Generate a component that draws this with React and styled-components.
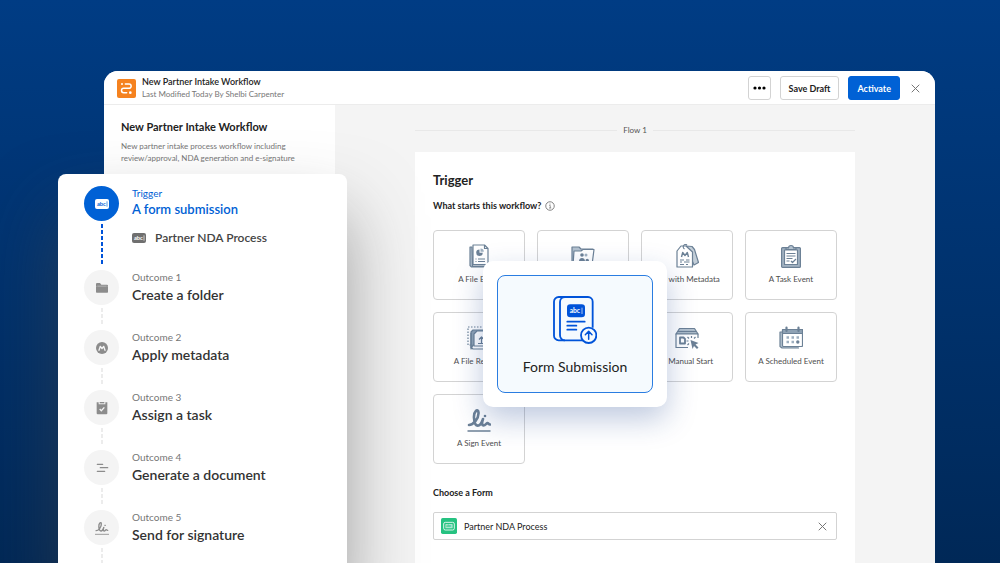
import React, { useState } from 'react'
import styled, { createGlobalStyle } from 'styled-components'

const outcomes = [
  { id: 1, title: 'Create a folder', icon: 'folder' },
  { id: 2, title: 'Apply metadata', icon: 'metadata' },
  { id: 3, title: 'Assign a task', icon: 'task' },
  { id: 4, title: 'Generate a document', icon: 'document' },
  { id: 5, title: 'Send for signature', icon: 'sign' },
]

const triggers = [
  { id: 'file', label: 'A File Event' },
  { id: 'folder', label: 'A Folder Event' },
  { id: 'metadata', label: 'File with Metadata' },
  { id: 'task', label: 'A Task Event' },
  { id: 'request', label: 'A File Request' },
  { id: 'form', label: 'Form Submission' },
  { id: 'manual', label: 'A Manual Start' },
  { id: 'scheduled', label: 'A Scheduled Event' },
  { id: 'sign', label: 'A Sign Event' },
]

const Logo = () => (
  <svg width="19" height="19" viewBox="0 0 57 57" aria-hidden="true">
    <rect width="57" height="57" rx="6" fill="#f5821f" />
    <g fill="none" stroke="#fff" strokeWidth="4.5" strokeLinecap="round">
      <path d="M25 15h11a6.500 6.500 0 0 1 0 13H20a6.500 6.500 0 0 0 0 13h9" />
    </g>
    <circle cx="15" cy="15" r="3" fill="#fff" />
    <circle cx="40" cy="41" r="4" fill="#fff" />
  </svg>
)

const CloseIcon = () => (
  <svg width="9" height="9" viewBox="0 0 9 9" aria-hidden="true">
    <path d="M1 1l7 7M8 1L1 8" stroke="#767676" strokeLinecap="round" />
  </svg>
)

const InfoIcon = () => (
  <svg width="10" height="10" viewBox="0 0 20 20" aria-hidden="true">
    <circle cx="10" cy="10" r="8.500" fill="none" stroke="#767676" strokeWidth="1.800" />
    <path d="M8.500 9h2v5M8 14h4.500" fill="none" stroke="#767676" strokeWidth="1.500" />
    <circle cx="10" cy="6" r="1.200" fill="#767676" />
  </svg>
)

const AbcIcon = ({ fill, color }) => (
  <svg width="14" height="10" viewBox="0 0 42 30" aria-hidden="true">
    <rect width="42" height="30" rx="6" fill={fill} />
    <text x="6" y="20" fontSize="17" fontWeight="700" fontFamily="Lato, sans-serif" fill={color}>
      abc
    </text>
    <path d="M36 7v16" stroke={color} strokeWidth="2" />
  </svg>
)

const GreenFormIcon = () => (
  <svg width="16" height="16" viewBox="0 0 48 48" aria-hidden="true">
    <rect width="48" height="48" rx="5" fill="#26c281" />
    <rect x="8" y="13" width="32" height="23" rx="5" fill="none" stroke="#fff" strokeWidth="2.500" />
    <rect x="13" y="18" width="22" height="13" rx="2" fill="#a8e7cd" />
    <text x="15" y="28" fontSize="10" fontWeight="700" fontFamily="Lato, sans-serif" fill="#26c281">
      abc
    </text>
  </svg>
)

const signPath = 'M2 17c4 0 10-6 9.500-12.500C11 0 6.500 3 7 10c.300 6 2 8 4.500 7.500 2.500-.500 3.500-4 4.500-6.500-1 3-1.500 6 .500 6.500 2 0 2.500-2 4-2.500 1 0 1 1.500 2.500 1.500'

const StepIcon = ({ name }) => (
  <svg width="14" height="16" viewBox="0 0 42 48" aria-hidden="true">
    {name === 'folder' && (
      <g>
        <path d="M3 12a3 3 0 0 1 3-3h9l4 5h17a3 3 0 0 1 3 3v1H3z" fill="#8c8c8c" />
        <rect x="3" y="18" width="36" height="20" rx="2" fill="#8c8c8c" />
        <path d="M7 18.500h28" stroke="#ddd" strokeWidth="1.500" />
      </g>
    )}
    {name === 'metadata' && (
      <g>
        <circle cx="21" cy="24" r="18" fill="#8c8c8c" />
        <path
          d="M12 31l4-12 5 7 5-7 4 12"
          fill="none"
          stroke="#f4f4f4"
          strokeWidth="4"
          strokeLinecap="round"
          strokeLinejoin="round"
        />
      </g>
    )}
    {name === 'task' && (
      <g>
        <path d="M5 7h6v6h20V7h6v33a3 3 0 0 1-3 3H8a3 3 0 0 1-3-3z" fill="#8c8c8c" />
        <path d="M14 6h14v4H14z" fill="#8c8c8c" />
        <path d="M14 27l5 5 9-10" fill="none" stroke="#f4f4f4" strokeWidth="4" />
      </g>
    )}
    {name === 'document' && (
      <path d="M7 13h16M16 23h22M7 34h22" stroke="#8c8c8c" strokeWidth="4" strokeLinecap="round" />
    )}
    {name === 'sign' && (
      <g fill="none" stroke="#8c8c8c" strokeLinecap="round" strokeLinejoin="round">
        <path d={signPath} transform="translate(0 4) scale(1.650)" strokeWidth="2.500" />
        <circle cx="30" cy="16" r="1.500" fill="#8c8c8c" />
        <path d="M1 43h40" strokeWidth="2.500" />
      </g>
    )}
  </svg>
)

const TriggerIcon = ({ name }) => (
  <svg
    width="24"
    height="24"
    viewBox="0 0 24 24"
    fill="none"
    stroke="#6c8196"
    strokeWidth="1.200"
    strokeLinejoin="round"
    aria-hidden="true"
  >
    {name === 'file' && (
      <>
        <path d="M3 3v18.500l1.500 1.500H17l1-1H5.500L5 3z" fill="#b4c2cf" />
        <path d="M6 1h11.500L21 4.500V20.500H6z" fill="#fff" />
        <path d="M17.500 1v3.500H21" />
        <path d="M12.500 5.500a3.300 3.300 0 1 0 3.300 3.300h-3.300z" fill="#6c8196" stroke="none" />
        <path d="M13.500 4.500a3.300 3.300 0 0 1 3.300 3.300h-3.300z" fill="#9fb0c0" stroke="none" />
        <path d="M8.500 15h1M11 15h7M8.500 17.500h1M11 17.500h7" />
      </>
    )}
    {name === 'folder' && (
      <>
        <path d="M1 21V3h7l2 2h12l-1.500 3" fill="#b4c2cf" />
        <path d="M3 7h7l2-1.500h11L21 21H2z" fill="#fff" />
        <circle cx="11" cy="11" r="1.800" fill="#6c8196" stroke="none" />
        <circle cx="15" cy="11" r="1.500" fill="#9fb0c0" stroke="none" />
        <path d="M8 17c0-4 6-4 6 0zM14.500 17c0-3 3.500-3 3.500 0z" fill="#6c8196" stroke="none" />
      </>
    )}
    {name === 'metadata' && (
      <>
        <path d="M11 2l6 .500 2.500 3 4 13-4.500 2.500z" fill="#c3ced8" />
        <path d="M2 7l4-5h5l6.500 6v15H2z" fill="#fff" />
        <path d="M9.500 5c-3-2 0-6 2.500-4" />
        <path d="M6.500 13l1.200-4.500 2.300 3 2.300-3L13.500 13" strokeWidth="1.400" />
        <path d="M5 16h4M11 16h3.500M5 18h2M9 18h5.500M5 20.500h4M11 20.500h2" />
      </>
    )}
    {name === 'task' && (
      <>
        <rect x="2.600" y="3.600" width="18.800" height="19.800" rx="1" fill="#a3b3c2" />
        <path d="M5.500 6h13v14.500h-13z" fill="#fff" />
        <path d="M7 5.500V4h2.500a2.500 2.500 0 0 1 5 0H17v1.500z" fill="#b4c2cf" />
        <path d="M7.500 9.500h9M7.500 12h9M7.500 14.500h6M7.500 17h3M12 17l1.500 1.500L17 15" />
      </>
    )}
    {name === 'request' && (
      <>
        <path d="M1 1h18v18H1z" strokeDasharray="1.500 1.500" />
        <path d="M4 6l2-2h11v15H6l-2 4z" fill="#8fa2b4" />
        <path d="M4 7v14.500L6 23h14" />
        <path d="M10 5h9l3 3v12H7V8z" fill="#fff" />
        <path d="M14.500 17v-5.500M12 13.500l2.500-2.500 2.500 2.500M11 17.500h7" />
      </>
    )}
    {name === 'manual' && (
      <>
        <path d="M1 8l3.500-5.500h15L23 8z" fill="#b4c2cf" />
        <path d="M3 5.500h18" />
        <path d="M23 12V8H1v13.500h12" fill="#fff" />
        <path d="M5 11.500h3.500l1.500 1.500v4.500H5z" strokeWidth="1.800" />
        <path d="M16.500 10v2M12.500 11l1.500 1.500M20.500 11L19 12.500M11.500 15h2M12.500 19l1.500-1.500" />
        <path d="M15.500 14l8 3-3 1.500 3 3-1.500 1.500-3-3-1.500 3z" fill="#6c8196" stroke="none" />
      </>
    )}
    {name === 'scheduled' && (
      <>
        <path d="M3 6H1v14.500L3 22h17" fill="#b4c2cf" />
        <rect x="3.500" y="3.500" width="20" height="17" rx="1" fill="#fff" />
        <path d="M3.500 3.500h20v4h-20z" fill="#8fa2b4" />
        <path d="M7.500 1.500v3.500M19.500 1.500v3.500" strokeWidth="2.200" strokeLinecap="round" />
        <path
          d="M7.500 11.500h2.500M12.500 11.500h2.500M17.500 11.500h2.500M7.500 16h2.500M12.500 16h2.500"
          stroke="#9fb0c0"
          strokeWidth="2.500"
        />
        <circle cx="18.800" cy="16" r="1.700" fill="#6c8196" stroke="none" />
      </>
    )}
    {name === 'sign' && (
      <>
        <path d={signPath} strokeWidth="2.600" strokeLinecap="round" />
        <circle cx="18" cy="8" r="1.300" fill="#6c8196" stroke="none" />
        <path d="M.500 23h23" strokeWidth="1.500" />
      </>
    )}
  </svg>
)

const FormSubmissionIcon = () => (
  <svg width="44" height="48" viewBox="0 0 132 144" fill="none" stroke="#0053d9" strokeWidth="5.500" aria-hidden="true">
    <path d="M92 133H17A14 14 0 0 1 3 119V17A14 14 0 0 1 17 3h88a14 14 0 0 1 14 14v78" />
    <path d="M36 3A15 15 0 0 0 21 18v99a15 15 0 0 0 15 16" />
    <rect x="42" y="25" width="54" height="39" rx="10" fill="#0053d9" stroke="none" />
    <text x="50" y="50" fontSize="20" fontWeight="700" fontFamily="Lato, sans-serif" fill="#fff" stroke="none">
      abc
    </text>
    <path d="M87 35v19" stroke="#fff" strokeWidth="2" />
    <path d="M43 77h52M43 89h27M43 101h27" strokeLinecap="round" />
    <circle cx="107" cy="118" r="23" fill="#f5fafe" />
    <path d="M107 130v-23M97 116l10-10 10 10" strokeWidth="4.500" strokeLinecap="round" strokeLinejoin="round" />
  </svg>
)

const App = () => {
  const [selected, setSelected] = useState('form')
  const [form, setForm] = useState('Partner NDA Process')

  return (
    <Page>
      <GlobalStyle />
      <Window>
        <Header>
          <Logo />
          <HeaderText>
            <HeaderTitle>New Partner Intake Workflow</HeaderTitle>
            <HeaderMeta>Last Modified Today By Shelbi Carpenter</HeaderMeta>
          </HeaderText>
          <Actions>
            <Button $narrow aria-label="More options">
              <svg width="13" height="4" viewBox="0 0 13 4" aria-hidden="true">
                <circle cx="2" cy="2" r="1.600" />
                <circle cx="6.500" cy="2" r="1.600" />
                <circle cx="11" cy="2" r="1.600" />
              </svg>
            </Button>
            <Button>Save Draft</Button>
            <Button $primary>Activate</Button>
            <IconButton aria-label="Close">
              <CloseIcon />
            </IconButton>
          </Actions>
        </Header>
        <Body>
          <Sidebar>
            <SidebarTitle>New Partner Intake Workflow</SidebarTitle>
            <SidebarText>
              New partner intake process workflow including
              <br />
              review/approval, NDA generation and e-signature
            </SidebarText>
          </Sidebar>
          <Content>
            <FlowDivider>Flow 1</FlowDivider>
            <Card>
              <CardTitle>Trigger</CardTitle>
              <Question>
                What starts this workflow?
                <InfoIcon />
              </Question>
              <TriggerGrid>
                {triggers.map((trigger) => (
                  <Cell key={trigger.id}>
                    {trigger.id === 'form' ? (
                      <Floating>
                        <FormTile
                          aria-pressed={selected === trigger.id}
                          onClick={() => setSelected(trigger.id)}
                        >
                          <FormSubmissionIcon />
                          {trigger.label}
                        </FormTile>
                      </Floating>
                    ) : (
                      <Tile
                        aria-pressed={selected === trigger.id}
                        onClick={() => setSelected(trigger.id)}
                      >
                        <TriggerIcon name={trigger.id} />
                        {trigger.label}
                      </Tile>
                    )}
                  </Cell>
                ))}
              </TriggerGrid>
              <FieldLabel htmlFor="form">Choose a Form</FieldLabel>
              <Field>
                <GreenFormIcon />
                <FieldInput id="form" value={form} onChange={(e) => setForm(e.target.value)} />
                <IconButton aria-label="Clear form" onClick={() => setForm('')}>
                  <CloseIcon />
                </IconButton>
              </Field>
            </Card>
          </Content>
        </Body>
      </Window>
      <Steps>
        <Step>
          <Rail>
            <Bubble $active>
              <AbcIcon fill="#fff" color="#0061d5" />
            </Bubble>
            <Connector $active />
          </Rail>
          <StepText>
            <StepLabel $active>Trigger</StepLabel>
            <StepTitle $active>A form submission</StepTitle>
            <StepDetail>
              <AbcIcon fill="#6f6f6f" color="#fff" />
              Partner NDA Process
            </StepDetail>
          </StepText>
        </Step>
        {outcomes.map((outcome) => (
          <Step key={outcome.id}>
            <Rail>
              <Bubble>
                <StepIcon name={outcome.icon} />
              </Bubble>
              <Connector />
            </Rail>
            <StepText>
              <StepLabel>Outcome {outcome.id}</StepLabel>
              <StepTitle>{outcome.title}</StepTitle>
            </StepText>
          </Step>
        ))}
      </Steps>
    </Page>
  )
}

export default App

const GlobalStyle = createGlobalStyle`
  * {
    box-sizing: border-box;
  }
  body {
    margin: 0;
    font-family: Lato, 'Liberation Sans', sans-serif;
    color: #222;
  }
  button, input {
    font-family: inherit;
    margin: 0;
    padding: 0;
  }
  svg {
    flex-shrink: 0;
  }
`

const Page = styled.div`
  position: relative;
  height: 100vh;
  overflow: hidden;
  display: flex;
  padding: 71px 65px 0 104px;
  background: linear-gradient(#003c84, #002857);
`
const Window = styled.main`
  flex: 1;
  display: flex;
  flex-direction: column;
  border-radius: 14px 14px 0 0;
  background-color: #f4f4f4;
  overflow: hidden;
`
const Header = styled.header`
  display: flex;
  align-items: center;
  padding: 4px 13px 3px;
  background-color: #fff;
  border-bottom: 1px solid #ececec;
`
const HeaderText = styled.div`
  flex: 1;
  margin-left: 6px;
  line-height: 13px;
`
const HeaderTitle = styled.div`
  font-size: 9px;
  font-weight: 600;
`
const HeaderMeta = styled.div`
  font-size: 8px;
  color: #767676;
`
const Actions = styled.div`
  display: flex;
  align-items: center;
  gap: 9px;
`
const Button = styled.button`
  height: 24px;
  padding: 0 ${(props) => (props.$narrow ? '4px' : '8px')};
  display: flex;
  align-items: center;
  border: 1px solid ${(props) => (props.$primary ? '#0061d5' : '#d3d3d3')};
  border-radius: 3px;
  background-color: ${(props) => (props.$primary ? '#0061d5' : '#fff')};
  color: ${(props) => (props.$primary ? '#fff' : '#222')};
  font-size: 9px;
  font-weight: 700;
  cursor: pointer;
`
const IconButton = styled.button`
  display: flex;
  padding: 2px;
  border: none;
  background-color: transparent;
  cursor: pointer;
`
const Body = styled.div`
  flex: 1;
  display: flex;
  min-height: 0;
`
const Sidebar = styled.aside`
  width: 231px;
  padding: 14px 17px;
  background-color: #fff;
`
const SidebarTitle = styled.h1`
  margin: 0 0 5px;
  font-size: 11px;
  line-height: 16px;
  font-weight: 700;
`
const SidebarText = styled.p`
  margin: 0;
  font-size: 8px;
  line-height: 12px;
  color: #767676;
`
const Content = styled.div`
  flex: 1;
  padding: 17px 80px 0;
`
const FlowDivider = styled.div`
  display: flex;
  align-items: center;
  gap: 6px;
  margin-bottom: 14px;
  font-size: 8px;
  line-height: 16px;
  color: #555;

  &::before,
  &::after {
    content: '';
    flex: 1;
    height: 1px;
    background-color: #e8e8e8;
  }
`
const Card = styled.section`
  min-height: 500px;
  padding: 18px;
  background-color: #fff;
`
const CardTitle = styled.h2`
  margin: 0 0 8px;
  font-size: 13px;
  line-height: 20px;
  font-weight: 700;
`
const Question = styled.div`
  display: flex;
  align-items: center;
  gap: 4px;
  margin-bottom: 16px;
  font-size: 9px;
  line-height: 16px;
  font-weight: 700;
`
const TriggerGrid = styled.div`
  display: grid;
  grid-template-columns: repeat(4, 1fr);
  gap: 12px;
  margin-bottom: 20px;
`
const Cell = styled.div`
  position: relative;
  height: 70px;
`
const Tile = styled.button`
  width: 100%;
  height: 100%;
  display: flex;
  flex-direction: column;
  align-items: center;
  justify-content: center;
  gap: 4px;
  border: 1px solid #d3d3d3;
  border-radius: 4px;
  background-color: #fff;
  color: #4e4e4e;
  font-size: 8px;
  line-height: 14px;
  cursor: pointer;
`
const Floating = styled.div`
  position: absolute;
  z-index: 1;
  top: -51px;
  left: -54px;
  padding: 14px;
  border-radius: 10px;
  background-color: #fff;
  box-shadow: 0 12px 30px rgba(20, 60, 140, 0.28);
`
const FormTile = styled.button`
  width: 156px;
  height: 118px;
  display: flex;
  flex-direction: column;
  align-items: center;
  justify-content: center;
  gap: 13px;
  padding-top: 4px;
  border: 1px solid #2a7de1;
  border-radius: 8px;
  background-color: #f5fafe;
  color: #222;
  font-size: 14px;
  line-height: 20px;
  cursor: pointer;
`
const FieldLabel = styled.label`
  display: block;
  margin-bottom: 10px;
  font-size: 9px;
  line-height: 18px;
  font-weight: 700;
`
const Field = styled.div`
  display: flex;
  align-items: center;
  gap: 7px;
  height: 28px;
  padding: 0 7px;
  border: 1px solid #d3d3d3;
  border-radius: 2px;
`
const FieldInput = styled.input`
  flex: 1;
  min-width: 0;
  border: none;
  outline: none;
  background-color: transparent;
  color: #222;
  font-size: 9px;
`
const Steps = styled.section`
  position: absolute;
  top: 174px;
  left: 58px;
  width: 289px;
  padding: 12px 26px;
  border-radius: 8px;
  background-color: #fff;
  box-shadow: 0 40px 70px rgba(70, 70, 70, 0.5);
`
const Step = styled.div`
  display: flex;
  gap: 13px;
  min-height: 60px;
`
const Rail = styled.div`
  display: flex;
  flex-direction: column;
  align-items: center;
`
const Bubble = styled.div`
  width: 35px;
  height: 35px;
  display: flex;
  align-items: center;
  justify-content: center;
  border-radius: 50%;
  background-color: ${(props) => (props.$active ? '#0061d5' : '#f4f4f4')};
`
const Connector = styled.div`
  flex: 1;
  width: 2px;
  margin: 3px 0 6px;
  background: repeating-linear-gradient(
    ${(props) => (props.$active ? '#0053d9' : '#ececec')} 0 4px,
    transparent 4px 6px
  );
`
const StepText = styled.div`
  flex: 1;
`
const StepLabel = styled.div`
  font-size: 10px;
  line-height: 14px;
  color: ${(props) => (props.$active ? '#0061d5' : '#767676')};
`
const StepTitle = styled.div`
  font-size: ${(props) => (props.$active ? '13px' : '14px')};
  line-height: ${(props) => (props.$active ? '18px' : '22px')};
  font-weight: 600;
  color: ${(props) => (props.$active ? '#0061d5' : '#333')};
`
const StepDetail = styled.div`
  display: flex;
  align-items: center;
  gap: 9px;
  margin: 12px 0 24px;
  font-size: 12px;
  line-height: 16px;
  font-weight: 600;
  color: #444;
`
